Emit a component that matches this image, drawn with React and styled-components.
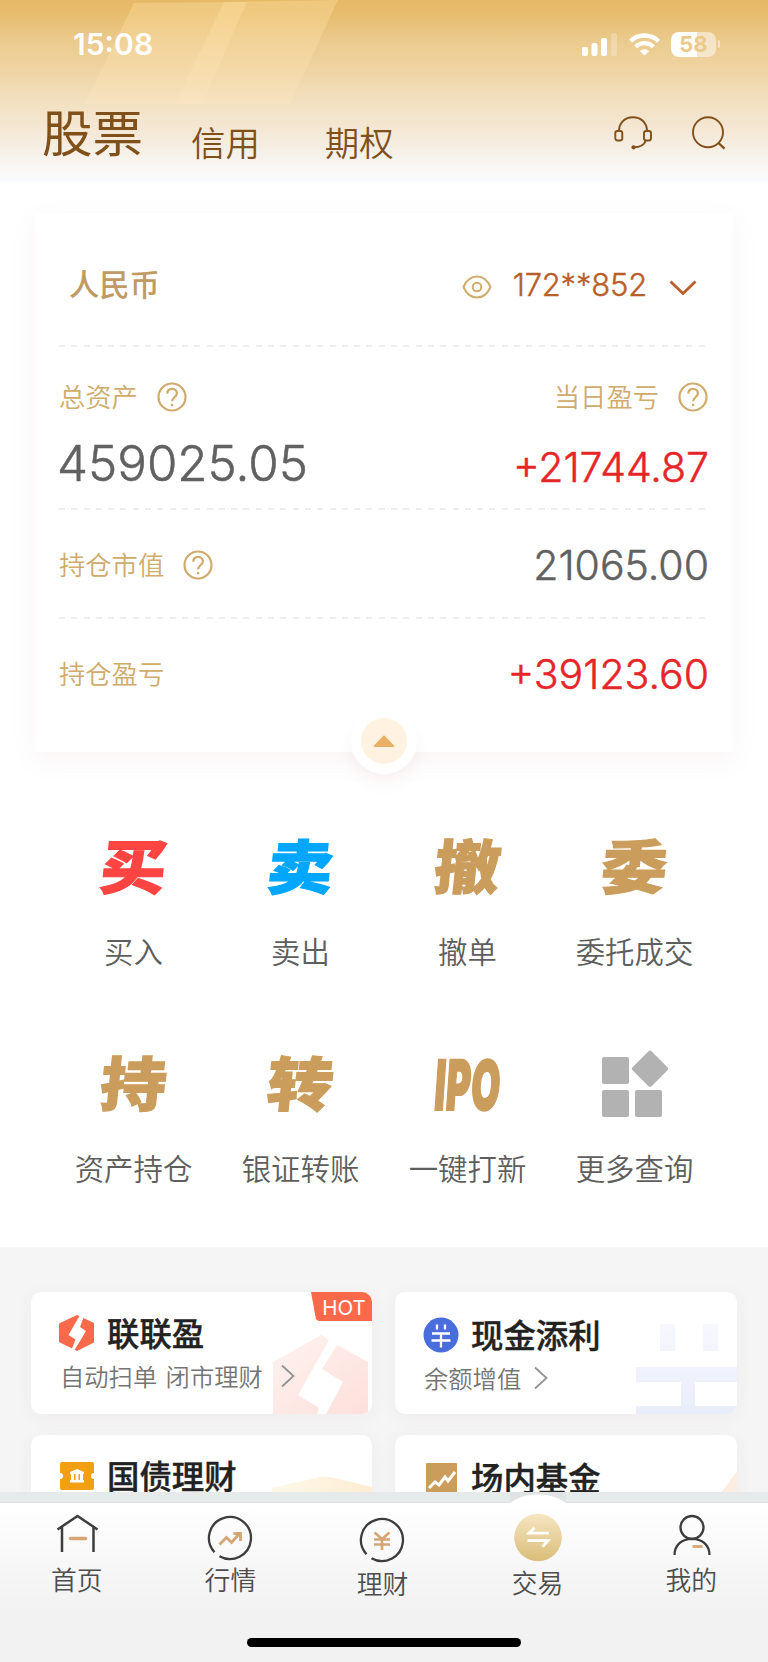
import React from 'react'
import styled, { createGlobalStyle } from 'styled-components'

const GlobalStyle = createGlobalStyle`
  * {
    box-sizing: border-box;
  }

  body {
    margin: 0;
    background: #fff;
    font-family: 'Noto Sans CJK SC', sans-serif;
  }

  svg {
    display: block;
    flex: none;
  }
`

const Screen = styled.main`
  display: flex;
  flex-direction: column;
  width: 768px;
  height: 1662px;
  overflow: hidden;
  background: #fff;
`

/* header */

const Header = styled.header`
  position: relative;
  flex: none;
  height: 185px;
  background: linear-gradient(#e5b966 0, #e7bc6d 14px, #ebca8d 40px, #efd4a3 70px, #f2dfbd 98px, #f4e6d2 125px, #f6efe5 150px, #f9f8f6 170px, #f9faff 180px, #fff 185px);
`

const Beams = styled.svg`
  position: absolute;
  top: 0;
  left: 80px;
`

const StatusBar = styled.div`
  position: relative;
  display: flex;
  align-items: center;
  height: 88px;
  padding: 0 48px 0 73px;
  color: #fff;
`

const Clock = styled.time`
  flex: 1;
  font: 600 30px/36px Inter, sans-serif;
`

const StatusIcons = styled.div`
  display: flex;
  align-items: center;
  gap: 11px;
`

const Battery = styled.div`
  display: flex;
  align-items: center;
  gap: 2px;
`

const BatteryBody = styled.div`
  width: 45px;
  height: 25px;
  border-radius: 8px;
  background: linear-gradient(90deg, #fff 26px, rgba(255, 255, 255, .5) 26px);
  color: #ebca8c;
  font: 700 22px/25px Inter, sans-serif;
  text-align: center;
`

const BatteryTip = styled.div`
  width: 2px;
  height: 8px;
  border-radius: 0 2px 2px 0;
  background: rgba(255, 255, 255, .5);
`

const Tabs = styled.nav`
  position: relative;
  display: flex;
  align-items: flex-start;
  height: 80px;
  padding: 0 42px;
  color: #80501b;
`

const Tab = styled.a`
  margin-right: ${p => p.$gap}px;
  font-size: ${p => p.$active ? 50.5 : 34.4}px;
  font-weight: ${p => p.$active ? 400 : 350};
  line-height: ${p => p.$active ? 85 : 106}px;
`

const Tools = styled.div`
  display: flex;
  gap: 40px;
  margin: 28px 0 0 auto;
`

/* assets */

const Assets = styled.section`
  position: relative;
  flex: none;
  height: 539px;
  margin: 28px 35px 0;
  padding: 0 25px 0 24px;
  background: #fff;
  box-shadow: 0 8px 24px rgba(190, 120, 120, .08);
`

const Account = styled.div`
  display: flex;
  align-items: center;
  height: 132px;
  padding: 16px 11px 0 10px;
`

const Currency = styled.h2`
  flex: 1;
  margin: 0 0 8px;
  color: #c09a63;
  font-size: 30.3px;
  font-weight: 500;
  line-height: 40px;
`

const AccountNo = styled.span`
  margin: 0 22px 5px 21px;
  color: #b8602b;
  font: 350 31px/36px Inter, sans-serif;
  letter-spacing: -.2px;
  -webkit-text-stroke: .4px #b8602b;
`

const Dashes = styled.div`
  height: 2px;
  background: repeating-linear-gradient(90deg, #eee 0, #eee 6px, transparent 6px, transparent 12.3px);
`

const Totals = styled.div`
  display: flex;
  justify-content: space-between;
  height: 161px;
  padding-top: 29px;
`

const Total = styled.div`
  display: flex;
  flex-direction: column;
  align-items: ${p => p.$end ? 'flex-end' : 'flex-start'};
`

const Row = styled.div`
  display: flex;
  align-items: center;
  justify-content: space-between;
  height: ${p => p.$height}px;
`

const Label = styled.div`
  display: flex;
  align-items: center;
  gap: 19px;
  height: 40px;
  color: #cfab6c;
  font-size: 26.3px;
  font-weight: 350;
  line-height: 38px;

  svg {
    margin-top: 2px;
  }
`

const Amount = styled.div`
  margin: ${p => p.$top || 0}px -1px 0 ${p => p.$large ? -2 : 0}px;
  color: ${p => p.$up ? '#e62528' : '#616161'};
  font: 350 ${p => p.$large ? 49.3 : 41}px/56px Inter, sans-serif;
  -webkit-text-stroke: .5px ${p => p.$up ? '#e62528' : '#616161'};
`

const Collapse = styled.button`
  position: absolute;
  left: 316px;
  bottom: -22px;
  display: grid;
  place-items: center;
  width: 66px;
  height: 66px;
  padding: 0;
  border: 10px solid #fff;
  border-radius: 50%;
  background: #fff2e1;
  box-shadow: 0 10px 14px rgba(190, 120, 120, .07);
`

/* actions */

const Actions = styled.section`
  display: grid;
  flex: none;
  grid-template-columns: repeat(4, 1fr);
  grid-auto-rows: 217px;
  height: 495px;
  padding: 72px 50px 0;
`

const Action = styled.a`
  display: flex;
  flex-direction: column;
  align-items: center;
  color: #5e5e5e;
  font-size: 29.4px;
  font-weight: 350;
  line-height: 42px;
`

const ActionIcon = styled.div`
  display: grid;
  place-items: center;
  height: 84px;
  margin-bottom: 21px;
`

const Glyph = styled.span`
  color: ${p => p.$color};
  font-size: 60px;
  font-weight: 900;
  line-height: 84px;
  transform: translateY(-2px) skewX(-6deg) scale(1.1, .98);
  -webkit-text-stroke: 1.2px ${p => p.$color};
`

const LatinGlyph = styled.span`
  width: 0;
  display: flex;
  justify-content: center;
  color: #cb9d5c;
  font: 900 69px/84px Inter, sans-serif;
  letter-spacing: 1px;
  transform: translateY(2px) skewX(-4deg) scaleX(.54);
  -webkit-text-stroke: 2px #cb9d5c;
`

/* products */

const Products = styled.section`
  display: grid;
  flex: none;
  grid-template-columns: 341px 342px;
  grid-auto-rows: 122px;
  gap: 21px 23px;
  height: 245px;
  padding: 45px 31px 0;
  overflow: hidden;
  background: #f5f5f6;
`

const Product = styled.article`
  position: relative;
  padding: ${p => p.$shift ? 2 : 0}px 0 0 28px;
  overflow: hidden;
  border-radius: 10px;
  background: #fff;
`

const ProductWrap = styled.div`
  display: grid;
  border-radius: 10px;
  box-shadow: 0 3px 18px rgba(150, 90, 90, .06);
`

const ProductTitle = styled.h3`
  position: relative;
  display: flex;
  align-items: center;
  gap: 12px;
  height: 46px;
  margin: 18px 0 0;
  color: #222;
  font-size: 32.4px;
  font-weight: 500;
  line-height: 43px;
  -webkit-text-stroke: .4px #222;
`

const TitleText = styled.span`
  margin-bottom: 3px;
`

const ProductNote = styled.p`
  position: relative;
  display: flex;
  align-items: center;
  gap: ${p => p.$gap}px;
  margin: 2px 0 0 1px;
  color: #747474;
  font-size: 24.3px;
  font-weight: 350;
  line-height: 36px;
  word-spacing: 3px;
`

const Watermark = styled.svg`
  position: absolute;
  right: ${p => p.$right || 0}px;
  bottom: 0;
`

const Hot = styled.div`
  position: absolute;
  top: 0;
  right: 0;
  width: 61px;
  height: 29px;
  padding-left: 5px;
  background: #fb694b;
  clip-path: polygon(0 0, 100% 0, 100% 100%, 12% 100%, 8% 92%);
  color: #fff;
  font: 400 20.5px/31px Inter, sans-serif;
  text-align: center;
`

/* bottom bar */

const Ledge = styled.div`
  flex: none;
  height: 10px;
  background: #e6eaeb;
`

const BottomBar = styled.footer`
  position: relative;
  flex: none;
  height: 160px;
  border-top: 1px solid #e0e2e2;
  background: linear-gradient(#fff 0, #f2f2f3 105px);
`

const Bump = styled.svg`
  position: absolute;
  top: -11px;
  left: 510px;
`

const Menu = styled.nav`
  position: relative;
  display: grid;
  grid-template-columns: repeat(5, 1fr);
  height: 135px;
`

const MenuItem = styled.a`
  display: flex;
  flex-direction: column;
  align-items: center;
  padding: ${p => p.$drop || 0}px ${p => p.$left || 0}px 0 0;
  color: #4d4d4d;
  font-size: 25.8px;
  font-weight: 350;
  line-height: 36px;

  svg {
    margin: 9px 0 3px;
    overflow: visible;
  }
`

const HomeIndicator = styled.div`
  width: 274px;
  height: 9px;
  margin: 0 auto;
  border-radius: 5px;
  background: #000;
`

const Help = () =>
  <svg width='30' height='30' viewBox='0 0 30 30' fill='none' stroke='#cfab6c' strokeWidth='2.200'>
    <circle cx='15' cy='15' r='13.5' />
    <path d='M10.3 11.8c0-3.2 2-5 4.8-5s4.8 1.8 4.8 4.5c0 3.7-4.8 4.2-4.8 8' />
    <path d='M15.1 21.8v2.4' />
  </svg>

const Arrow = () =>
  <svg width='14' height='24' viewBox='0 0 14 24' fill='none' stroke='#929292' strokeWidth='1.8'>
    <path d='M1 1.5 12.5 12 1 22.5' />
  </svg>

const actions = [
  { name: '买入', glyph: '买', color: '#ff4442' },
  { name: '卖出', glyph: '卖', color: '#00a6ff' },
  { name: '撤单', glyph: '撤', color: '#cb9d5c' },
  { name: '委托成交', glyph: '委', color: '#cb9d5c' },
  { name: '资产持仓', glyph: '持', color: '#cb9d5c' },
  { name: '银证转账', glyph: '转', color: '#cb9d5c' },
  { name: '一键打新', icon: <LatinGlyph>IPO</LatinGlyph> },
  {
    name: '更多查询',
    icon: (
      <svg width='67' height='67' viewBox='0 0 67 67' fill='#b2b2b2'>
        <rect x='1' y='7' width='27' height='27' rx='2' />
        <rect x='1' y='40' width='27' height='27' rx='2' />
        <rect x='34' y='40' width='27' height='27' rx='2' />
        <path d='M47.500 1.200q1.500-1.500 3 0l16 16q1.500 1.500 0 3l-16 16q-1.500 1.500-3 0l-16-16q-1.500-1.500 0-3z' />
      </svg>
    )
  }
]

const StatusBarContent = () =>
  <StatusBar>
    <Clock>15:08</Clock>
    <StatusIcons>
      <svg width='36' height='23' viewBox='0 0 36 23' fill='#fff'>
        <rect x='0' y='14' width='6' height='9' rx='2' />
        <rect x='9.500' y='10' width='6' height='13' rx='2' />
        <rect x='19' y='5' width='6' height='18' rx='2' />
        <rect x='29' y='0' width='6' height='23' rx='2' opacity='.25' />
      </svg>
      <svg width='31' height='23' viewBox='0 0 31 23' fill='none' stroke='#fff' strokeWidth='4.300'>
        <path d='M1.500 8.200a20 20 0 0 1 28 0' />
        <path d='M6.600 13.800a12.700 12.700 0 0 1 17.800 0' />
        <path d='M15.500 22.500 10.800 18.300a6.700 6.700 0 0 1 9.400 0z' fill='#fff' stroke='none' />
      </svg>
      <Battery>
        <BatteryBody>58</BatteryBody>
        <BatteryTip />
      </Battery>
    </StatusIcons>
  </StatusBar>

const App = () =>
  <Screen>
    <GlobalStyle />
    <Header>
      <Beams width='264' height='104' viewBox='0 0 264 104'>
        <defs>
          <linearGradient id='beam' x1='0' y1='0' x2='0' y2='1'>
            <stop offset='0' stopColor='#ffe0a0' stopOpacity='.38' />
            <stop offset='1' stopColor='#ffe8c0' stopOpacity='.25' />
          </linearGradient>
        </defs>
        <path d='M54 3 167 2 122 104H5z' fill='url(#beam)' />
        <path d='M144 2 258 0 210 104H95z' fill='url(#beam)' />
      </Beams>
      <StatusBarContent />
      <Tabs>
        <Tab $active $gap={48}>股票</Tab>
        <Tab $gap={65}>信用</Tab>
        <Tab $gap={0}>期权</Tab>
        <Tools>
          <svg width='38' height='34' viewBox='0 0 38 34' fill='none' stroke='#80501b' strokeWidth='1.900'>
            <path d='M5 15C5 6.500 11 1.300 19 1.300S33 6.500 33 15M32 24c-1.500 5-6 7.300-12.500 7.300' />
            <rect x='1.300' y='15' width='7' height='9.500' rx='2.200' />
            <rect x='30' y='15' width='7' height='9.500' rx='2.200' />
            <circle cx='19.500' cy='31.300' r='1.200' fill='#80501b' />
          </svg>
          <svg width='34' height='34' viewBox='0 0 34 34' fill='none' stroke='#80501b' strokeWidth='1.900'>
            <circle cx='16' cy='16.300' r='15' />
            <path d='m26.500 27 6 5.700' strokeWidth='2.400' />
          </svg>
        </Tools>
      </Tabs>
    </Header>

    <Assets>
      <Account>
        <Currency>人民币</Currency>
        <svg width='30' height='24' viewBox='0 0 30 24' fill='none' stroke='#cfab6c' strokeWidth='2'>
          <path d='M1.500 12C4.500 5 9.500 1.500 15 1.500S25.500 5 28.500 12C25.500 19 20.500 22.500 15 22.500S4.500 19 1.500 12z' />
          <circle cx='15' cy='12' r='4.300' />
        </svg>
        <AccountNo>172**852</AccountNo>
        <svg width='28' height='16' viewBox='0 0 28 16' fill='none' stroke='#b8602b' strokeWidth='2.800'>
          <path d='m1.500 2.500 12.500 12 12.500-12' />
        </svg>
      </Account>
      <Dashes />
      <Totals>
        <Total>
          <Label>总资产 <Help /></Label>
          <Amount $large $top={19}>459025.05</Amount>
        </Total>
        <Total $end>
          <Label>当日盈亏 <Help /></Label>
          <Amount $up $top={23}>+21744.87</Amount>
        </Total>
      </Totals>
      <Dashes />
      <Row $height={107}>
        <Label>持仓市值 <Help /></Label>
        <Amount $top={3}>21065.00</Amount>
      </Row>
      <Dashes />
      <Row $height={107}>
        <Label>持仓盈亏</Label>
        <Amount $up $top={3}>+39123.60</Amount>
      </Row>
      <Collapse>
        <svg width='22' height='13' viewBox='0 0 22 13' fill='#e8b165'>
          <path d='M10 1q1-1 2 0l9 9.500q1 1.500-1 1.500H2q-2 0-1-1.500z' />
        </svg>
      </Collapse>
    </Assets>

    <Actions>
      {actions.map(({ name, glyph, color, icon }) =>
        <Action key={name}>
          <ActionIcon>{icon || <Glyph $color={color}>{glyph}</Glyph>}</ActionIcon>
          {name}
        </Action>
      )}
    </Actions>

    <Products>
      <ProductWrap>
        <Product>
          <Watermark $right={4} width='95' height='79' viewBox='0 0 95 79'>
            <defs>
              <linearGradient id='red' x1='0' y1='0' x2='1' y2='1'>
                <stop offset='0' stopColor='#fef3f1' />
                <stop offset='1' stopColor='#fddfda' />
              </linearGradient>
            </defs>
            <path d='M0 27 48 0l8 5-31 55 21 13-2 6H0zM64 10l31 17v52H53l17-32-21-13z' fill='url(#red)' />
          </Watermark>
          <Hot>HOT</Hot>
          <ProductTitle>
            <svg width='36' height='36' viewBox='0 0 36 36'>
              <path d='M18 0 0 8.500V27l18 9 17-8.500V8z' fill='#fb694b' />
              <path d='M21 0 9.500 20l7 4.500L12 36h3l12-20-6-4L25.500 0z' fill='#fff' />
            </svg>
            <TitleText>联联盈</TitleText>
          </ProductTitle>
          <ProductNote $gap={18}>自动扫单 闭市理财 <Arrow /></ProductNote>
        </Product>
      </ProductWrap>
      <ProductWrap>
        <Product $shift>
          <Watermark width='101' height='90' viewBox='0 0 101 90'>
            <defs>
              <linearGradient id='blue' x1='0' y1='0' x2='0' y2='1'>
                <stop offset='0' stopColor='#f7f8fe' />
                <stop offset='1' stopColor='#e9edfb' />
              </linearGradient>
            </defs>
            <path d='M24 0h15v27H24zM67 0h15v27H67zM0 43h101v15H59v24h42v8H0v-8h45V58H0z' fill='url(#blue)' />
          </Watermark>
          <ProductTitle>
            <svg width='36' height='36' viewBox='0 0 36 36'>
              <circle cx='18' cy='18' r='17.500' fill='#4a6ddd' />
              <path d='M14 7.500v5M22 7.500v5M9 16.500h18M8.500 23.500h19M18 16.500v14' fill='none' stroke='#fff' strokeWidth='2.300' />
            </svg>
            <TitleText>现金添利</TitleText>
          </ProductTitle>
          <ProductNote $gap={13}>余额增值 <Arrow /></ProductNote>
        </Product>
      </ProductWrap>
      <ProductWrap>
        <Product>
          <Watermark width='100' height='81' viewBox='0 0 100 81'>
            <defs>
              <linearGradient id='gold' x1='0' y1='0' x2='1' y2='0'>
                <stop offset='0' stopColor='#fff8e8' />
                <stop offset='1' stopColor='#fcedd3' />
              </linearGradient>
            </defs>
            <path d='M0 12 48 1q5-1 10 0l42 10v71H0z' fill='url(#gold)' />
          </Watermark>
          <ProductTitle>
            <svg width='36' height='30' viewBox='0 0 36 30'>
              <path d='M3 1h30q2 0 2 2v9a3 3 0 0 0 0 6v9q0 2-2 2H3q-2 0-2-2v-9a3 3 0 0 0 0-6V3q0-2 2-2z' fill='#f29f13' />
              <path d='M11 11 18 8l7 3v2H11zM12 13h3v6h-3zM16.500 13h3v6h-3zM21 13h3v6h-3zM11 19h14v2.500H11z' fill='#fff' />
            </svg>
            <TitleText>国债理财</TitleText>
          </ProductTitle>
        </Product>
      </ProductWrap>
      <ProductWrap>
        <Product $shift>
          <Watermark width='16' height='86' viewBox='0 0 16 86'>
            <path d='M16 0v86H0V22z' fill='#fbeee0' />
          </Watermark>
          <ProductTitle>
            <svg width='36' height='31' viewBox='0 0 36 31'>
              <rect x='3' width='31' height='31' rx='1' fill='#cb9d5c' />
              <path d='m6 25 6-6 4 3 6-8 3 4 7-9' fill='none' stroke='#fff' strokeWidth='3' />
            </svg>
            <TitleText>场内基金</TitleText>
          </ProductTitle>
        </Product>
      </ProductWrap>
    </Products>

    <Ledge />
    <BottomBar>
      <Bump width='56' height='14' viewBox='0 0 56 14'>
        <path d='M0 0h56v11H0z' fill='#dfe3e4' />
        <path d='M0 14v-3C8 5 18 2.500 28 2.500S48 5 56 11v3z' fill='#fff' />
      </Bump>
      <Menu>
        <MenuItem>
          <svg width='44' height='46' viewBox='0 0 44 46' fill='none' stroke='#3d3d3d' strokeWidth='2.500'>
            <path d='M2.500 17.500 22.500 4l20 13.500M7 15v25M38.500 15v25' strokeLinejoin='round' />
            <path d='M15.500 26.500h15' stroke='#d4a676' strokeWidth='3.500' strokeLinecap='round' />
          </svg>
          首页
        </MenuItem>
        <MenuItem>
          <svg width='46' height='46' viewBox='0 0 46 46' fill='none' stroke='#3d3d3d' strokeWidth='2.300'>
            <g transform='translate(0 4)'>
              <path d='M7.500 36.200A21 21 0 1 1 12.500 40.200' />
              <path d='m12.500 28.500 7-7 5 5 8.500-9.500M26.500 17.500h7V25' stroke='#d4a676' strokeWidth='2.800' />
            </g>
          </svg>
          行情
        </MenuItem>
        <MenuItem $drop={4} $left={3}>
          <svg width='46' height='46' viewBox='0 0 46 46' fill='none' stroke='#3d3d3d' strokeWidth='2.300'>
            <g transform='translate(0 2)'>
              <path d='M7.500 36.200A21 21 0 1 1 12.500 40.200' />
              <path d='m15.500 14.500 7.500 6.500 7.500-6.500M15 21.500h16M15 26.500h16M23 20v12' stroke='#d4a676' strokeWidth='2.600' />
            </g>
          </svg>
          理财
        </MenuItem>
        <MenuItem $drop={1}>
          <svg width='48' height='48' viewBox='0 0 48 48'>
            <defs>
              <linearGradient id='trade' x1='0' y1='0' x2='0' y2='1'>
                <stop offset='0' stopColor='#f6e5c1' />
                <stop offset='1' stopColor='#d9bd78' />
              </linearGradient>
            </defs>
            <circle cx='24' cy='24.500' r='23.800' fill='url(#trade)' />
            <path d='M35 20.200H15l5.500-5.500M13.500 27.700H34l-5.500 6' fill='none' stroke='#fff' strokeWidth='2.800' />
          </svg>
          交易
        </MenuItem>
        <MenuItem>
          <svg width='40' height='46' viewBox='0 0 40 46' fill='none' stroke='#3d3d3d' strokeWidth='2.300'>
            <circle cx='21' cy='15.500' r='11.500' />
            <path d='M3.500 43C3.500 33 11 26.800 21 26.800S38.500 33 38.500 43' />
            <path d='M21.500 34.500h10' stroke='#d4a676' strokeWidth='2.800' />
          </svg>
          我的
        </MenuItem>
      </Menu>
      <HomeIndicator />
    </BottomBar>
  </Screen>

export default App
